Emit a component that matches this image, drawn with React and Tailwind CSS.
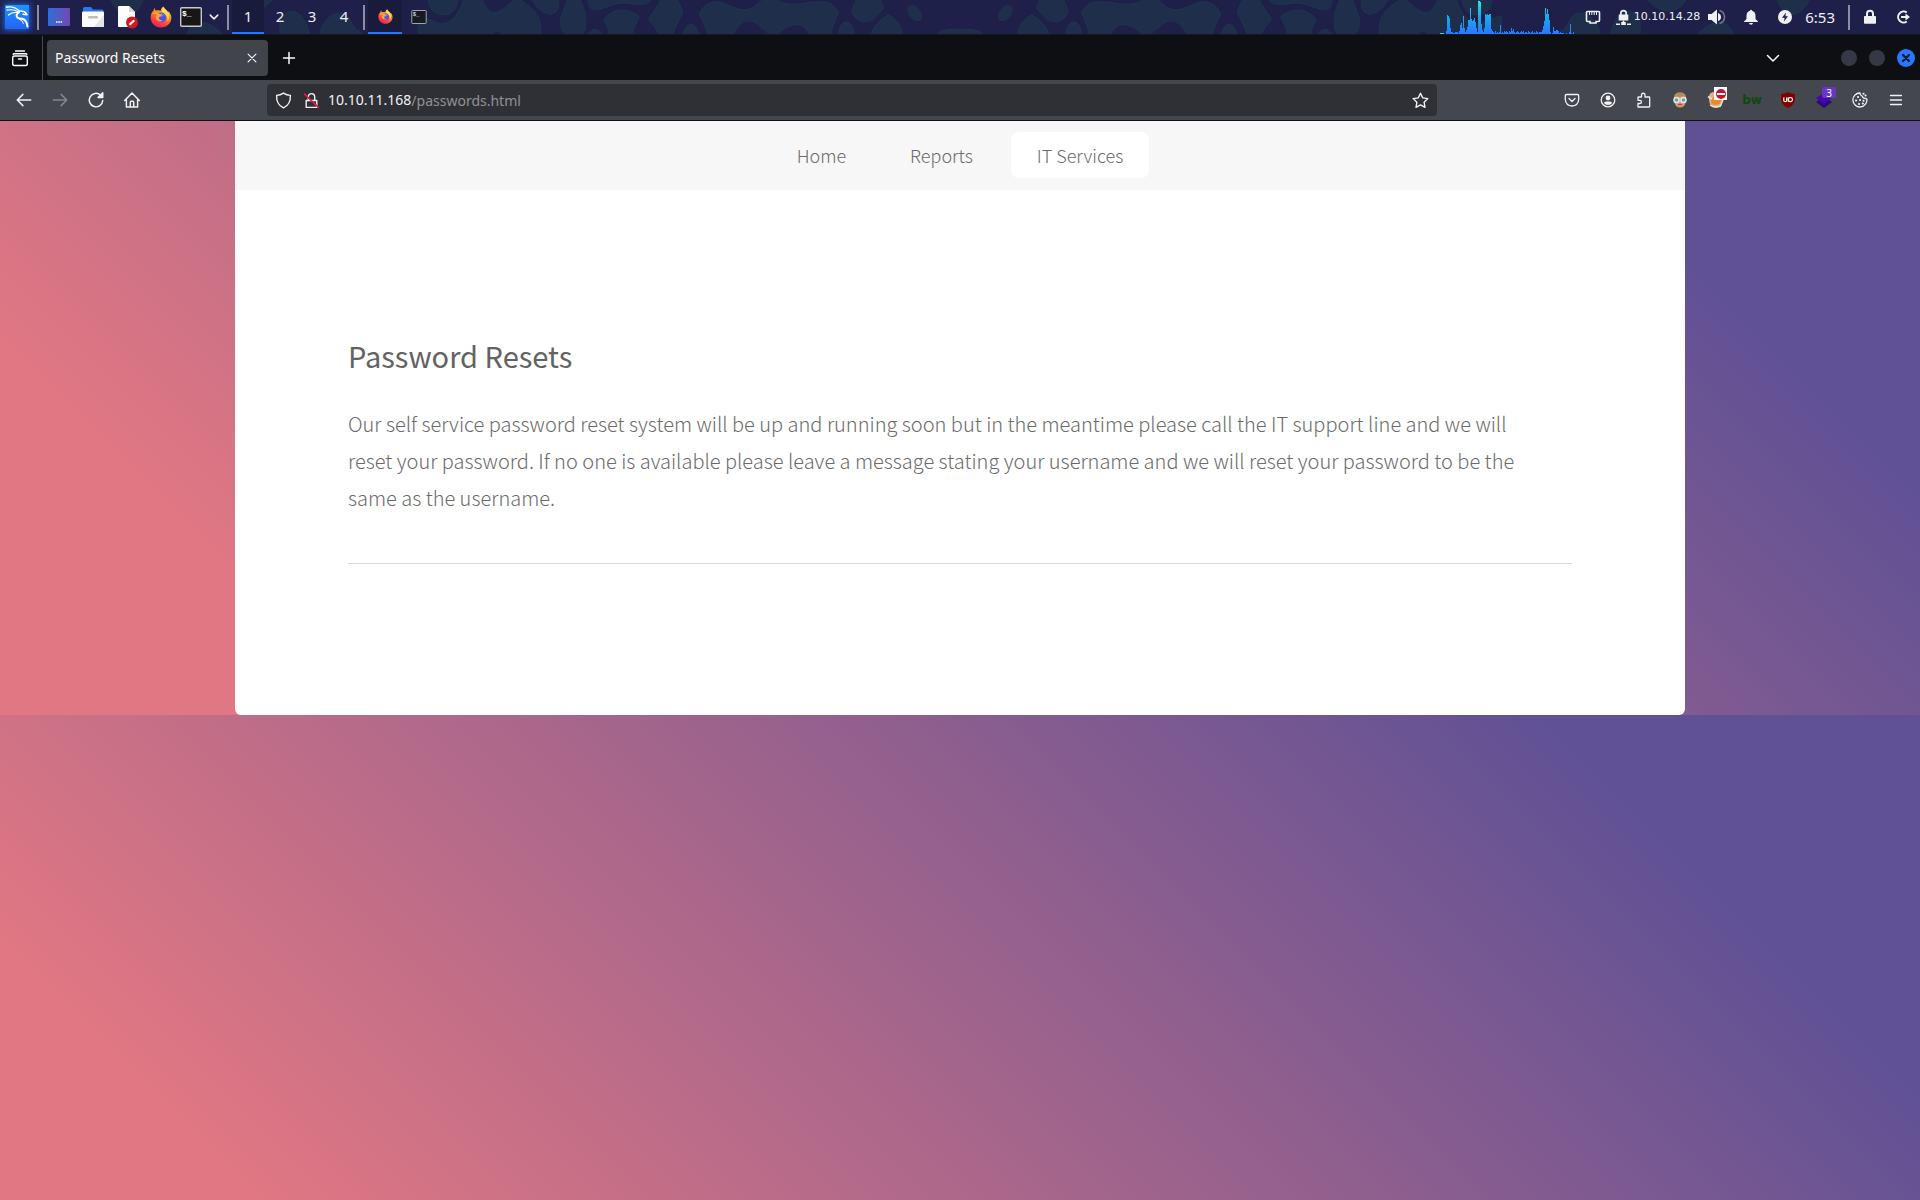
const BARS = [
  [0, 3], [1, 19], [2, 18], [3, 16], [4, 6], [5, 2], [6, 2], [7, 1], [8, 1], [9, 2], [10, 2], [11, 2], [12, 1], [13, 3], [14, 9], [15, 11],
  [16, 6], [17, 18], [18, 6], [19, 2], [20, 4], [21, 7], [22, 14], [23, 14], [24, 26], [25, 15], [26, 13], [27, 14], [28, 16],
  [29, 12], [30, 6], [31, 2], [32, 33], [33, 33], [34, 32], [35, 10], [36, 4], [37, 2], [38, 6], [39, 20], [40, 19], [41, 20],
  [42, 19], [43, 20], [44, 20], [45, 5], [46, 3], [47, 2], [48, 1], [49, 3], [50, 1], [51, 2], [52, 1], [53, 2], [54, 9], [55, 1],
  [56, 2], [57, 1], [58, 3], [59, 2], [60, 3], [61, 2], [62, 1], [63, 3], [64, 2], [65, 6], [66, 3], [67, 5], [68, 2], [69, 1],
  [70, 2], [71, 3], [72, 2], [73, 1], [74, 2], [75, 3], [76, 2], [77, 3], [78, 1], [79, 2], [80, 2], [81, 1], [82, 3], [83, 2],
  [84, 1], [85, 2], [86, 3], [87, 1], [88, 2], [89, 1], [90, 3], [91, 2], [92, 1], [93, 2], [94, 2], [95, 2], [96, 4], [97, 8],
  [98, 13], [99, 26], [100, 20], [101, 25], [102, 20], [103, 14], [104, 2], [106, 1], [107, 7], [108, 3], [109, 3], [110, 4], [111, 4],
  [112, 3], [113, 1], [114, 2], [115, 1], [116, 1], [117, 1], [120, 1], [123, 2], [124, 10], [125, 1], [127, 2],
];

function Blobs() {
  return (
    <g fill="#1e2e4b" stroke="#1d364d" strokeWidth="3">
      <path d="M26-5C24 30 45 44 72 44S112 25 112-5Z" />
      <path d="M-420 106V60C-400 20-350 20-330 106Z M-560-5C-540 40-480 50-440-5Z M-700 106C-690 60-640 50-590 106Z M-930-5C-900 60-850 60-830-5Z M-300 106C-290 40-230 20-210 60S-180 90-170 106Z" />
      <path d="M-5 106V48C30 55 50 72 70 72C110 60 120 30 132-5H185C195 25 210 39 225 38C255 30 265 10 290-4C330 10 362 50 362 80V106H250C240 90 222 90 212 106Z" />
      <path d="M335-5C345 20 370 42 392 43C415 40 420 10 415-5Z" />
      <path d="M443-5C438 20 421 45 422 65S430 95 437 106H488C496 85 498 70 497 50S485 10 478-5Z" />
      <path d="M503-5C505 20 515 31 530 30C560 22 580 10 605 9S645 15 665 13S690 5 695-5Z" />
      <path d="M551 60C570 35 590 30 610 31S650 42 658 50C650 70 640 85 634 106H570C566 85 560 75 551 60Z" />
      <path d="M503 106C512 84 535 80 546 106Z M789 106C798 62 826 62 838 106Z" />
      <path d="M723-5C715 20 700 35 686 56C700 75 710 90 720 106H757C765 80 778 60 788 38C785 20 775 8 770-5Z" />
      <path d="M838 42C850 15 870 5 890 5C920 8 940 28 970 29S1020 5 1035-5H1060C1090 15 1120 15 1150 10S1200 5 1220 7C1240 10 1248 25 1255 38C1245 60 1238 85 1230 106H1172C1150 62 1110 65 1070 106H1050C1010 62 980 50 960 75C948 85 942 98 938 106H866C858 80 850 65 838 42Z" />
      <path d="M1310-5C1305 15 1295 25 1297 38C1310 70 1340 66 1357 60C1375 45 1382 35 1390 22L1378-5Z" />
      <path d="M1256 106C1258 75 1270 66 1280 66S1300 75 1303 106Z M1354 106C1358 80 1380 60 1404 45C1430 55 1445 80 1447 106Z" />
      <ellipse cx="1484" cy="39" rx="16" ry="26" transform="rotate(-38 1484 39)" />
      <path d="M1550 106C1560 85 1600 88 1625 88V106Z" />
    </g>
  );
}

function PanelPattern() {
  return (
    <svg className="absolute inset-0 h-full w-full" viewBox="0 0 1920 34" preserveAspectRatio="xMidYMid slice" aria-hidden="true">
      <g transform="translate(420 0) scale(.3333)"><Blobs /></g>
      <g transform="translate(1500 0) scale(-.3333 .3333)"><Blobs /></g>
    </svg>
  );
}

function Dragon() {
  return (
    <svg viewBox="0 0 24 24" className="size-6" fill="none" stroke="#fff" strokeLinecap="round" strokeLinejoin="round" aria-hidden="true">
      <path d="M1.500 2.200Q9 .8 14.500 6" strokeWidth="1.400" />
      <path d="M2 5.200Q8 3.800 13.500 6.800" strokeWidth="1.200" />
      <path d="M3.500 10Q7 6.800 13 7.500" strokeWidth="1.200" />
      <path d="M13 6.500Q17 5 20.500 7.500L22 9.800L18 9.200" strokeWidth="1.600" />
      <path d="M14 7.500Q10.500 9.500 12 12Q13 13.600 17 13.800Q21.500 14.500 22.500 21.500" strokeWidth="2" />
      <path d="M14 14Q18 15.500 18.500 18.500" strokeWidth="1" />
    </svg>
  );
}

function Firefox({ className }) {
  return (
    <svg viewBox="0 0 22 22" className={className} aria-hidden="true">
      <defs>
        <linearGradient id="fox" x1=".8" y1="0" x2=".3" y2="1">
          <stop offset="0" stopColor="#ffe04a" />
          <stop offset=".4" stopColor="#ff8a24" />
          <stop offset=".75" stopColor="#ff3f3f" />
          <stop offset="1" stopColor="#e4205d" />
        </linearGradient>
      </defs>
      <path fill="url(#fox)" d="M3.600 4.500C4 3.200 4 2.600 4.700 2C4.800 3.500 5.300 4.200 6.300 4.600C8 4 9.500 4.200 10.800 4.700C10.800 3 12 1.300 13.600.5C13.700 2.800 17 3.800 18 6.200C18.500 6 18.500 5.500 18.400 5C21 8 22 11 21 14.500C19.800 18.700 15.500 21.500 11 21.500C5 21.500.6 17 .6 11.200C.6 8.500 1.800 6 3.600 4.500Z" />
      <circle cx="11.200" cy="11.500" r="5" fill="#5a4de0" />
      <path fill="#4f7ff0" d="M8 8.500C10 6.500 14 7 15.800 10C14 9 12.500 10 12 11H8Z" />
      <path fill="#ffa62b" d="M1.500 8C3.500 6 7 5.500 9 7.500C10 8.300 11.500 8.200 12.200 9C11.500 10.500 9.600 10.300 9 11.300C8.600 13.500 10.500 14.800 12.700 14.200C10.800 16.500 7 15.500 6 13C5.300 11 6 9.500 7 9C5 7.800 3 8.200 1.500 8Z" />
      <path fill="#ffe255" d="M14 1C14.500 3.500 18.500 5 19 9C19.600 12.500 18.500 14.500 17.500 15.500C17.500 11 16 7.500 12 6C11.800 4 12.500 2 14 1Z" opacity=".85" />
    </svg>
  );
}

function Terminal({ className }) {
  return (
    <svg viewBox="0 0 22 20" className={className} aria-hidden="true">
      <rect x=".7" y=".7" width="20.600" height="18.600" rx="1" fill="#171717" stroke="#c9c9c9" strokeWidth="1.400" />
      <text x="2" y="9" fontSize="8" fontWeight="700" fontFamily="Liberation Mono, monospace" fill="#fff">$_</text>
    </svg>
  );
}

function Icon({ size = 16, children, className = "" }) {
  return (
    <svg width={size} height={size} viewBox="0 0 16 16" fill="none" stroke="currentColor" strokeWidth="1.300" strokeLinecap="round" strokeLinejoin="round" className={className} aria-hidden="true">
      {children}
    </svg>
  );
}

function PanelButton({ label, width = "w-[34px]", children }) {
  return (
    <button aria-label={label} className={`flex h-full shrink-0 items-center justify-center ${width}`}>{children}</button>
  );
}

function ToolButton({ label, children, className = "" }) {
  return (
    <button aria-label={label} className={`relative flex h-8 w-9 shrink-0 items-center justify-center ${className}`}>{children}</button>
  );
}

const Separator = () => <span className="h-[25px] w-0.5 shrink-0 bg-[#8b8e9e]" />;

function DesktopPanel() {
  return (
    <header className="relative h-[35px] overflow-hidden border-b border-[#16191f] bg-[#1e2049] font-['Noto_Sans',sans-serif] text-[#eef0f2]">
      <PanelPattern />
      <div className="relative flex h-full items-center">
        <button aria-label="Applications" className="ml-[5px] flex size-6 shrink-0 items-center justify-center bg-linear-to-b from-[#1f95ff] to-[#2462f5] shadow-[0_0_6px_1px_#1d63d8]">
          <Dragon />
        </button>
        <span className="w-2 shrink-0" />
        <Separator />
        <span className="w-[3px] shrink-0" />
        <PanelButton label="Show desktop">
          <svg width="22" height="18" viewBox="0 0 22 18" aria-hidden="true">
            <defs><linearGradient id="desk"><stop stopColor="#2f6fd8" /><stop offset="1" stopColor="#7248ae" /></linearGradient></defs>
            <rect width="22" height="18" rx="1" fill="url(#desk)" />
            <path d="M8 14h1.500M10.300 14h1.500M12.600 14h1.500" stroke="#fff" strokeWidth="1.500" />
          </svg>
        </PanelButton>
        <PanelButton label="Files">
          <svg width="22" height="20" viewBox="0 0 22 20" aria-hidden="true">
            <path d="M1 1.500Q1 0 2.500 0H9L11 2.500H20Q21.500 2.500 21.500 4V8H1Z" fill="#2f76e8" />
            <rect y="4.500" width="22" height="15.500" rx="1" fill="#fafafa" />
            <path d="M22 8V19Q22 20 21 20H12Z" fill="#e4e4e4" />
            <rect x="6" y="9" width="10" height="2.500" rx="1.200" fill="#bdbdbd" />
          </svg>
        </PanelButton>
        <PanelButton label="Text editor">
          <svg width="22" height="23" viewBox="0 0 22 23" aria-hidden="true">
            <path d="M2 1Q2 0 3 0H13L19 6V20Q19 21 18 21H3Q2 21 2 20Z" fill="#fdfdfd" />
            <path d="M13 0L19 6H13Z" fill="#d8d8d8" />
            <circle cx="16" cy="16.500" r="6" fill="#d3191d" />
            <path d="M13.500 18.800L18.300 14.300" stroke="#fff" strokeWidth="2.200" />
          </svg>
        </PanelButton>
        <PanelButton label="Firefox"><Firefox className="size-[22px]" /></PanelButton>
        <PanelButton label="Terminal" width="w-[26px]"><Terminal className="h-5 w-[22px]" /></PanelButton>
        <PanelButton label="More terminals" width="w-5"><Icon size={12}><path d="M3 5.500L8 10.500L13 5.500" strokeWidth="2" /></Icon></PanelButton>
        <span className="w-[3px] shrink-0" />
        <Separator />
        <nav aria-label="Workspaces" className="mx-[3px] flex h-full shrink-0 text-[15px]">
          <button className="w-8 border-b-2 border-[#2777ff] bg-[#191b3d]">1</button>
          <button className="w-8 border-b-2 border-transparent">2</button>
          <button className="w-8 border-b-2 border-transparent">3</button>
          <button className="w-8 border-b-2 border-transparent">4</button>
        </nav>
        <Separator />
        <button aria-label="Firefox window" className="ml-[3px] flex h-full w-[34px] shrink-0 items-center justify-center border-b-2 border-[#2777ff] bg-[#191b3d]"><Firefox className="size-[15px]" /></button>
        <PanelButton label="Terminal window"><Terminal className="h-[14px] w-4 opacity-80" /></PanelButton>
        <span className="flex-1" />
        <svg width="134" height="34" viewBox="-6 -1 134 34" shapeRendering="crispEdges" className="shrink-0" aria-label="Processor load">
          <defs><linearGradient id="load" gradientUnits="userSpaceOnUse" x1="0" y1="0" x2="0" y2="33"><stop stopColor="#0df5dc" /><stop offset=".5" stopColor="#17a8ee" /><stop offset="1" stopColor="#2b76ff" /></linearGradient></defs>
          <rect x="-6" y="32" width="4" height="1" fill="#12e6d2" />
          {BARS.map(([x, h]) => <rect key={x} x={x} y={33 - h} width="1" height={h} fill="url(#load)" />)}
        </svg>
        <PanelButton label="Network" width="ml-[3px] w-8">
          <svg width="16" height="16" viewBox="0 0 16 16" aria-hidden="true" fill="none" stroke="currentColor">
            <path d="M2.500 2.500H13.500Q14.500 2.500 14.500 3.500V11.500Q14.500 12.500 13.500 12.500H11V14H5V12.500H2.500Q1.500 12.500 1.500 11.500V3.500Q1.500 2.500 2.500 2.500Z" strokeWidth="1.600" />
            <path d="M4.500 3V6M6.800 3V6M9.200 3V6M11.500 3V6" />
          </svg>
        </PanelButton>
        <div className="ml-1.5 flex shrink-0 items-center gap-0.5">
          <svg width="17" height="17" viewBox="0 0 17 17" aria-hidden="true" fill="currentColor">
            <path d="M5 5.500V4.200a3.500 3.500 0 0 1 7 0V5.500h1.300v6H3.700v-6ZM6.700 5.500h3.600V4.200a1.800 1.800 0 0 0-3.600 0Z" />
            <path d="M7.700 11.500h1.600V13h1.500v3H6.200v-3h1.500ZM1 14.500h4V16H1ZM12 14.500h4V16h-4Z" />
          </svg>
          <span className="font-['DejaVu_Sans',sans-serif] text-[11px]">10.10.14.28</span>
        </div>
        <PanelButton label="Volume">
          <svg width="18" height="18" viewBox="0 0 18 18" aria-hidden="true" fill="currentColor">
            <path d="M0 6h3.500L9 1.500v15L3.500 12H0ZM10 5q3 1 3 4t-3 4Z" />
            <path d="M11.500 2.500q5 1.500 5 6.500t-5 6.500" fill="none" stroke="#6f7690" strokeWidth="1.600" />
          </svg>
        </PanelButton>
        <PanelButton label="Notifications">
          <svg width="16" height="16" viewBox="0 0 16 16" aria-hidden="true" fill="currentColor"><path d="M7 1.800a1 1 0 0 1 2 0Q12.500 2.800 12.500 7v3L15 12.500V13H1v-.5L3.500 10V7Q3.500 2.800 7 1.800ZM6 14h4q-.3 1.700-2 1.700T6 14Z" /></svg>
        </PanelButton>
        <PanelButton label="Power manager">
          <svg width="16" height="16" viewBox="0 0 16 16" aria-hidden="true"><circle cx="8" cy="8" r="7" fill="currentColor" /><path d="M9 3.500L5 8.700h2.600L7 12.500l4-5.200H8.400Z" fill="#1e2049" /></svg>
        </PanelButton>
        <time className="ml-[3px] shrink-0 text-[15px]">6:53</time>
        <span className="w-[13px] shrink-0" />
        <Separator />
        <PanelButton label="Lock screen" width="ml-1 w-8">
          <svg width="16" height="16" viewBox="0 0 16 16" aria-hidden="true" fill="currentColor"><path d="M4 7V4.800a4 4 0 0 1 8 0V7h1.300q.7 0 .7.700V14q0 .8-.7.800H2.700Q2 14.800 2 14V7.700Q2 7 2.700 7Zm2 0h4V4.800a2 2 0 0 0-4 0Z" /></svg>
        </PanelButton>
        <PanelButton label="Log out">
          <svg width="16" height="16" viewBox="0 0 16 16" aria-hidden="true" fill="none" stroke="currentColor"><path d="M11.800 3.500A5.500 5.500 0 1 0 11.800 12.500" strokeWidth="2" /><path d="M6 8h6" strokeWidth="2" /><path d="M10.500 4.500L15 8l-4.500 3.500Z" fill="currentColor" stroke="none" /></svg>
        </PanelButton>
      </div>
    </header>
  );
}

function TabBar() {
  return (
    <div className="flex h-[45px] items-center bg-[#0e0f13] text-[#fbfbfe]">
      <button aria-label="Firefox View" className="flex h-11 w-[43px] shrink-0 items-center justify-center border-r border-[#4a4b52] pr-0.5">
        <svg width="18" height="18" viewBox="0 0 18 18" fill="none" stroke="currentColor" strokeWidth="1.400" strokeLinecap="round" aria-hidden="true"><path d="M4.500 2h9" /><path d="M2.200 5.500Q2.300 4.700 3.100 4.700H14.900Q15.700 4.700 15.800 5.500" /><rect x="1.700" y="7" width="14.600" height="9.500" rx="1.800" /><path d="M7.500 10h3" /></svg>
      </button>
      <div className="ml-1 flex h-9 w-[221px] shrink-0 items-center rounded bg-[#42444b] pl-2">
        <span className="flex-1 text-sm">Password Resets</span>
        <button aria-label="Close tab" className="flex size-8 items-center justify-center"><Icon size={14}><path d="M3.500 3.500L12.500 12.500M12.500 3.500L3.500 12.500" /></Icon></button>
      </div>
      <button aria-label="New tab" className="ml-[3px] flex size-9 shrink-0 items-center justify-center"><Icon size={16}><path d="M8 2.500V13.500M2.500 8H13.500" strokeWidth="1.500" /></Icon></button>
      <span className="flex-1" />
      <button aria-label="List all tabs" className="mr-[50px] flex size-9 shrink-0 items-center justify-center"><Icon size={16}><path d="M2.500 5.500L8 11L13.500 5.500" strokeWidth="1.500" /></Icon></button>
      <div className="flex shrink-0 items-center gap-3 pr-[5px]">
        <button aria-label="Minimize" className="size-4 rounded-full bg-[#343945]" />
        <button aria-label="Maximize" className="size-4 rounded-full bg-[#343945]" />
        <button aria-label="Close" className="flex size-[18px] items-center justify-center rounded-full bg-[#2777ff] text-[#0e1a33]"><Icon size={12}><path d="M4 4L12 12M12 4L4 12" strokeWidth="3" /></Icon></button>
      </div>
    </div>
  );
}

function NavToolbar() {
  return (
    <div className="flex h-[41px] items-center border-b border-[#101114] bg-[#45474e] px-1.5 text-[#f2f2f5]">
      <ToolButton label="Back"><Icon size={18}><path d="M14 8H2.500M7 3L2 8L7 13" /></Icon></ToolButton>
      <ToolButton label="Forward" className="text-[#86878c]"><Icon size={18}><path d="M2 8H13.500M9 3L14 8L9 13" /></Icon></ToolButton>
      <ToolButton label="Reload"><Icon size={18}><path d="M14 8.500A6 6 0 1 1 12 3.600" /><path d="M14 1.500V5.700H9.800Z" fill="currentColor" /></Icon></ToolButton>
      <ToolButton label="Home"><Icon size={18}><path d="M1.500 8.500L8 1.700L14.500 8.500M3 7.500V14.300H13V7.500M6.500 14V10Q6.500 9.200 7.200 9.200H8.800Q9.500 9.200 9.500 10V14" /></Icon></ToolButton>
      <div className="mx-[117px] flex h-8 min-w-0 flex-1 items-center rounded bg-[#2f3035] pl-2">
        <button aria-label="Tracking protection" className="shrink-0"><Icon size={17}><path d="M8 1C6 2.300 4 3 1.500 3.200C1.300 8.500 3.500 13 8 15C12.500 13 14.700 8.500 14.500 3.200C12 3 10 2.300 8 1Z" /></Icon></button>
        <button aria-label="Connection is not secure" className="ml-[11px] shrink-0">
          <Icon size={17}><path d="M3 8H13V14.500H3ZM5 8V4.500A3 3 0 0 1 11 4.500V8" /><path d="M1.500 2L14.500 14.500" stroke="#e3194d" strokeWidth="1.500" /></Icon>
        </button>
        <div className="ml-2 flex min-w-0 flex-1 items-center text-sm">
          <label htmlFor="address">10.10.11.168</label>
          <input id="address" type="text" defaultValue="/passwords.html" className="h-8 min-w-0 flex-1 bg-transparent text-[#8f9094] outline-none" />
        </div>
        <button aria-label="Bookmark this page" className="mr-2 shrink-0"><Icon size={17}><path d="M8 1.200L10.100 5.500L14.900 6.200L11.400 9.600L12.200 14.400L8 12.100L3.800 14.400L4.600 9.600L1.100 6.200L5.900 5.500Z" /></Icon></button>
      </div>
      <ToolButton label="Save to Pocket"><Icon><path d="M2.500 2.500H13.500Q14.700 2.500 14.700 3.700V7.500Q14.200 13.700 8 14Q1.800 13.700 1.300 7.500V3.700Q1.300 2.500 2.500 2.500ZM5 6.500L8 9.500L11 6.500" /></Icon></ToolButton>
      <ToolButton label="Account"><Icon><circle cx="8" cy="8" r="6.800" /><circle cx="8" cy="6" r="2.400" fill="currentColor" stroke="none" /><path d="M3.800 11Q4.500 9.500 6 9.500H10Q11.500 9.500 12.200 11Q10.500 13 8 13T3.800 11Z" fill="currentColor" stroke="none" /></Icon></ToolButton>
      <ToolButton label="Extensions"><Icon><path d="M2 15V11.500H3.800A1.600 1.600 0 0 0 3.800 8.300H2V5.500Q2 5 2.500 5H5.500V3A1.700 1.700 0 0 1 9 3V5H13Q13.700 5 13.700 5.700V14.300Q13.700 15 13 15Z" /></Icon></ToolButton>
      <ToolButton label="Disguise">
        <svg width="16" height="16" viewBox="0 0 16 16" aria-hidden="true"><path d="M2 6Q2 .5 8 .5T14 6L13.500 11Q12 15.500 8 15.500T2.500 11Z" fill="#d49a72" /><path d="M2 6Q3 .5 8 .5T14 6Q11 3.500 8 4.500T2 6Z" fill="#b58a5c" /><circle cx="4.500" cy="8" r="2.500" fill="#6f9aa5" stroke="#dcebee" strokeWidth="1.500" /><circle cx="11.500" cy="8" r="2.500" fill="#6f9aa5" stroke="#dcebee" strokeWidth="1.500" /><path d="M6 12.800Q8 12 10 12.800" stroke="#a14d45" strokeWidth="1.200" fill="none" /></svg>
      </ToolButton>
      <ToolButton label="Proxy switcher">
        <svg width="18" height="18" viewBox="0 0 18 18" aria-hidden="true"><path d="M2 6Q2 1 8 1T16 6L14.500 14Q10 18.500 4.500 15.500Q1.500 12 2 6Z" fill="#d9b48c" /><path d="M3.500 7Q9 5 14.500 7L13 13Q8 14.500 4.500 13Z" fill="#f0872a" /><path d="M1 5.500L5 8M12 7L17 4" stroke="#e9e5df" strokeWidth="1.500" /><path d="M3 14Q8 17.500 13.500 15L16 9" fill="none" stroke="#efe3d0" strokeWidth="1.400" /></svg>
        <span className="absolute top-[3px] left-4 flex size-[13px] items-center justify-center bg-white"><span className="flex size-[10px] items-center justify-center rounded-full bg-[#c4122e]"><span className="h-0.5 w-2 bg-white" /></span></span>
      </ToolButton>
      <ToolButton label="Built with"><span className="font-['DejaVu_Sans',sans-serif] text-xs font-bold text-[#0c4a0c]">bw</span></ToolButton>
      <ToolButton label="uBlock Origin">
        <svg width="16" height="16" viewBox="0 0 16 16" aria-hidden="true"><path d="M8 0Q11 2 15 2V7Q14.800 13 8 16Q1.200 13 1 7V2Q5 2 8 0Z" fill="#800000" /><path d="M3.800 5.500V8.500Q3.800 9.700 5.200 9.700T6.700 8.500V5.500M8.300 5.500V9.700M8.300 7.600a2.100 2.100 0 1 1 4.200 0a2.100 2.100 0 1 1-4.200 0" fill="none" stroke="#fff" strokeWidth="1.200" /></svg>
      </ToolButton>
      <ToolButton label="Wappalyzer">
        <svg width="18" height="18" viewBox="0 0 18 18" aria-hidden="true"><path d="M1 11L9 6L17 11L9 17Z" fill="#2b0782" /><path d="M1 7L9 2L17 7L9 13Z" fill="#4608ad" /></svg>
        <span className="absolute top-[3px] left-4 flex h-[11px] w-[14px] items-center justify-center rounded-xs bg-[#6a35c4] text-[10px] leading-none text-white">3</span>
      </ToolButton>
      <ToolButton label="Cookie editor"><Icon><path d="M8 1Q8 3.500 10.200 4.200Q10.700 6.500 14.800 6.800A7 7 0 1 1 8 1Z" /><path d="M11.500 1.800h.1M13.500 3.500h.1M6 5h.1M4 8.500h.1M8 8h.1M7 12h.1M10.800 11.500h.1M11.500 8.800h.1" strokeWidth="2" /></Icon></ToolButton>
      <ToolButton label="Open application menu"><Icon><path d="M2.500 3.500H13.500M2.500 8H13.500M2.500 12.500H13.500" /></Icon></ToolButton>
    </div>
  );
}

export default function App() {
  return (
    <div className="flex min-h-screen flex-col font-['Noto_Sans',sans-serif]">
      <DesktopPanel />
      <TabBar />
      <NavToolbar />
      <div className="flex-1 bg-[linear-gradient(45deg,#e07783_15%,#605195_85%)] bg-[length:100%_604px] bg-[position:0_594px] font-['Noto_Sans_CJK_SC',sans-serif] font-light text-[#6b6b6b]">
        <div className="mx-auto max-w-[1450px] rounded-b-md bg-white">
          <nav className="flex justify-center gap-3 bg-[#f7f7f7] pt-[11px] pb-3 text-lg leading-[46px]">
            <a href="#home" className="px-[26px]">Home</a>
            <a href="#reports" className="px-[26px]">Reports</a>
            <a href="#services" className="rounded-lg bg-white px-[26px]">IT Services</a>
          </nav>
          <main className="px-[113px] pt-[138px] pb-[151px]">
            <h1 className="text-[29px] leading-[54px] font-normal text-[#636363]">Password Resets</h1>
            <p className="mt-[23px] max-w-[1190px] text-xl leading-[37px]">
              Our self service password reset system will be up and running soon but in the meantime please call the IT support line and we will reset your password. If no one is available please leave a message stating your username and we will reset your password to be the same as the username.
            </p>
            <hr className="mt-[47px] border-[#dadada]" />
          </main>
        </div>
      </div>
    </div>
  );
}
